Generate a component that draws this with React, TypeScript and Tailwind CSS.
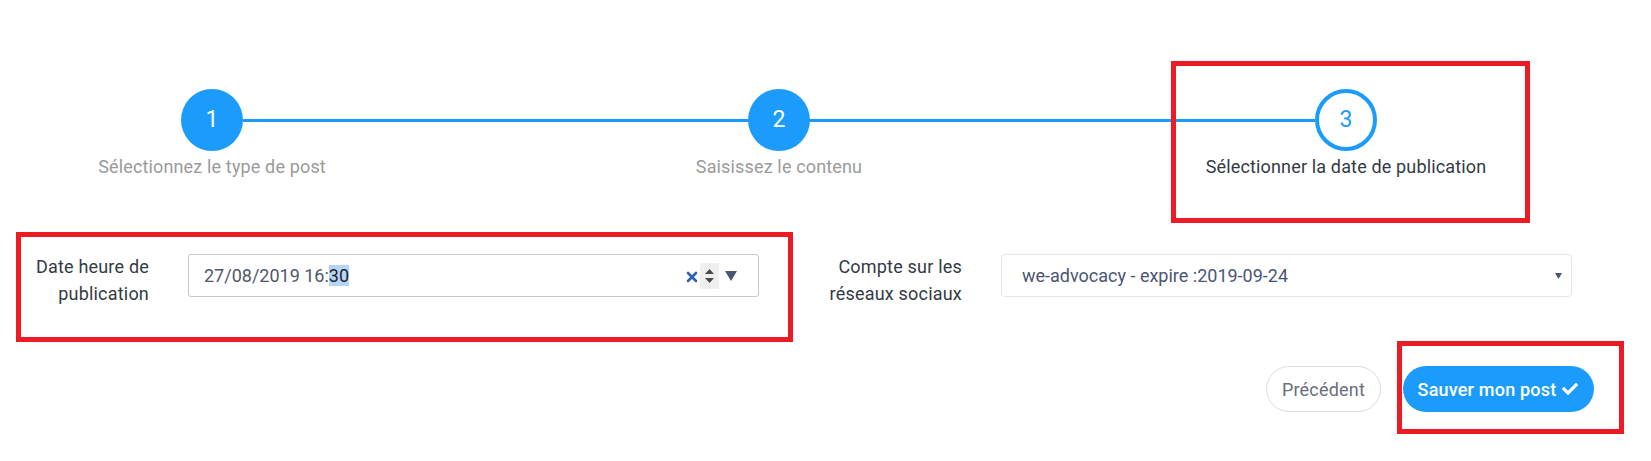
import { FaCheck } from "react-icons/fa";

const steps = [
  { n: 1, label: "Sélectionnez le type de post", current: false },
  { n: 2, label: "Saisissez le contenu", current: false },
  { n: 3, label: "Sélectionner la date de publication", current: true },
];

function Stepper() {
  return (
    <div className="relative pt-[89px] pl-[62px]">
      <div className="absolute left-[243px] top-[119px] h-[3px] w-[1072px] bg-[#1b9cfc]" />
      <div className="relative grid grid-cols-[repeat(3,300px)] gap-x-[267px]">
        {steps.map((s) => (
          <div key={s.n} className="flex flex-col items-center">
            <div
              className={
                s.current
                  ? "w-[62px] h-[62px] rounded-full border-[4px] border-[#1b9cfc] bg-white text-[#1b9cfc] flex items-center justify-center text-[23px]"
                  : "w-[62px] h-[62px] rounded-full bg-[#1b9cfc] text-white flex items-center justify-center text-[23px]"
              }
            >
              {s.n}
            </div>
            <p
              className={
                s.current
                  ? "mt-[4px] text-[18px] leading-[24px] tracking-[0.15px] text-[#333a44] whitespace-nowrap"
                  : "mt-[4px] text-[18px] leading-[24px] tracking-[0.15px] text-[#9a9a9a] whitespace-nowrap"
              }
            >
              {s.label}
            </p>
          </div>
        ))}
      </div>
    </div>
  );
}

function DateInput() {
  return (
    <div className="w-[571px] h-[43px] border border-[#c8c8c8] rounded-[3px] flex items-center pl-[15px] pr-[21px]">
      <span className="text-[18px] text-[#515767]">
        27/08/2019 16:<span className="bg-[#b5d5fb] text-[#1f1f1f]">30</span>
      </span>
      <div className="ml-auto flex items-center">
        <svg width="12" height="12" viewBox="0 0 12 12" className="mt-[2px]">
          <path d="M2 2 L10 10 M10 2 L2 10" stroke="#2f63ae" strokeWidth="2.6" strokeLinecap="round" />
        </svg>
        <div className="ml-[2px] w-[19px] h-[26px] bg-[#efefef] flex flex-col items-center justify-center gap-[4px]">
          <svg width="9" height="5" viewBox="0 0 9 5">
            <path d="M0 5 L4.5 0 L9 5 Z" fill="#4a4a4a" />
          </svg>
          <svg width="9" height="5" viewBox="0 0 9 5">
            <path d="M0 0 L9 0 L4.5 5 Z" fill="#4a4a4a" />
          </svg>
        </div>
        <svg width="12" height="10" viewBox="0 0 12 10" className="ml-[6px]">
          <path d="M0 0 L12 0 L6 10 Z" fill="#4b5578" />
        </svg>
      </div>
    </div>
  );
}

function AccountSelect() {
  return (
    <div className="w-[571px] h-[43px] border border-[#e6e6e6] rounded-[4px] flex items-center pl-[20px] pr-[9px]">
      <span className="text-[18px] text-[#4a5576]">we-advocacy - expire :2019-09-24</span>
      <svg width="7" height="6" viewBox="0 0 7 6" className="ml-auto">
        <path d="M0 0 L7 0 L3.5 6 Z" fill="#4b5578" />
      </svg>
    </div>
  );
}

function FormRow() {
  return (
    <div className="mt-[75px] flex items-start pl-[29px]">
      <label className="w-[120px] text-right text-[18px] leading-[26.5px] tracking-[0.2px] text-[#333a44]">
        Date heure de publication
      </label>
      <div className="ml-[39px]">
        <DateInput />
      </div>
      <label className="ml-[63px] w-[140px] text-right text-[18px] leading-[26.5px] tracking-[0.2px] text-[#333a44]">
        Compte sur les réseaux sociaux
      </label>
      <div className="ml-[39px]">
        <AccountSelect />
      </div>
    </div>
  );
}

function Actions() {
  return (
    <div className="mt-[59px] flex justify-end gap-[22px] pr-[57px]">
      <button className="w-[115px] h-[46px] rounded-full border border-[#dcdcdc] bg-white text-[18px] tracking-[0.2px] text-[#6a6f7a]">
        Précédent
      </button>
      <button className="w-[191px] h-[46px] rounded-full bg-[#1b9cfc] text-white text-[18px] tracking-[0.2px] font-medium flex items-center justify-center gap-[5px]">
        Sauver mon post <FaCheck className="w-[18px] h-[16px]" />
      </button>
    </div>
  );
}

export default function App() {
  return (
    <div className="relative w-[1651px] h-[461px] overflow-hidden bg-white font-['Roboto',sans-serif]">
      <Stepper />
      <FormRow />
      <Actions />
      {/* annotation boxes drawn over the screenshot */}
      <div className="pointer-events-none absolute left-[1171px] top-[61px] w-[359px] h-[162px] border-[5px] border-[#ed1c24]" />
      <div className="pointer-events-none absolute left-[16px] top-[232px] w-[777px] h-[110px] border-[5px] border-[#ed1c24]" />
      <div className="pointer-events-none absolute left-[1397px] top-[341px] w-[227px] h-[93px] border-[5px] border-[#ed1c24]" />
    </div>
  );
}
